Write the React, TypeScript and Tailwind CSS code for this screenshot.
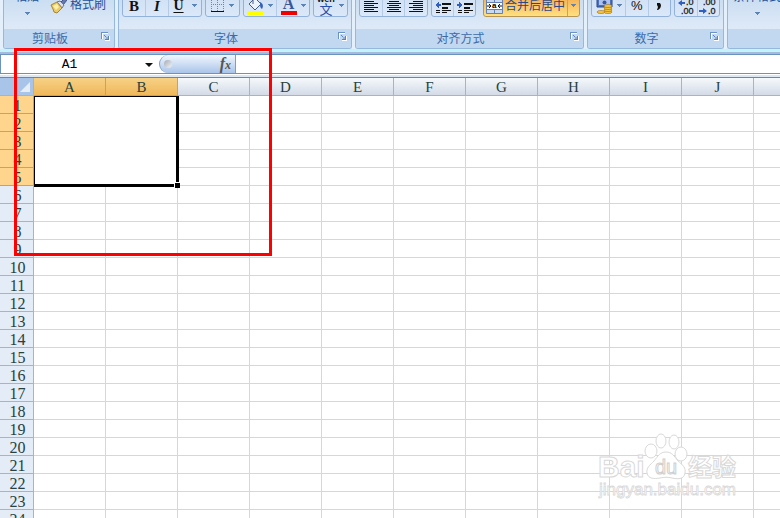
import type { ReactNode } from "react";

const COLUMNS = ["A", "B", "C", "D", "E", "F", "G", "H", "I", "J", "K"];
const ROWS = Array.from({ length: 24 }, (_, i) => i + 1);
const CJK = "font-['Liberation_Sans','Noto_Sans_CJK_SC',sans-serif]";

function Arrow() {
  return (
    <svg width="5" height="3" viewBox="0 0 5 3" className="shrink-0" shapeRendering="crispEdges" aria-hidden="true">
      <path d="M0 0h5v1H4v1H3v1H2V2H1V1H0z" fill="#5b84bd" />
    </svg>
  );
}

function Group({ label, width, launcher = true, children }: { label: string; width: string; launcher?: boolean; children: ReactNode }) {
  return (
    <section
      aria-label={label}
      className={`flex h-full flex-col overflow-hidden rounded-b-[3px] border border-t-0 border-[#95b8dc] bg-[#dce8f6] ${width}`}
    >
      <div className="flex h-[29px] shrink-0 items-end gap-[3px] bg-linear-to-b from-[#cbdef2] to-[#dfeaf8] px-[3px] pb-3">{children}</div>
      <div className="flex flex-1 items-center bg-[#c1d8f0] text-xs leading-[18px] text-[#3e6aaa]">
        <span className="flex-1 text-center">{label}</span>
        {launcher && (
          <button aria-label={`${label}选项`} className="flex w-[18px] justify-center pb-1">
            <svg width="9" height="9" viewBox="0 0 9 9" fill="none" shapeRendering="crispEdges">
              <path d="M1.500 7V1.500H7" stroke="#fff" />
              <path d="M.5 6.500V.5H6.500" stroke="#6b92c5" />
              <path d="M3 3h1v1H3zM4 4h1v1H4z" fill="#5b84bd" />
              <path d="M4 7h3V4h1v4H4z" fill="#5b84bd" />
              <path d="M5 5h2v2H5z" fill="#8eaed6" />
              <path d="M4 8.500h4.500V4" stroke="#fff" />
            </svg>
          </button>
        )}
      </div>
    </section>
  );
}

function Cluster({ width, children }: { width: string; children: ReactNode }) {
  return (
    <div className={`flex h-[23px] shrink-0 rounded-[3px] border border-[#92b2dc] bg-linear-to-b from-[#cfdff3] to-[#dbe8f9] ${width}`}>
      {children}
    </div>
  );
}

function Tool({ label, last = false, children }: { label: string; last?: boolean; children: ReactNode }) {
  return (
    <button
      aria-label={label}
      className={`flex flex-1 items-center justify-center gap-1 font-['Liberation_Serif',serif] text-[15px] leading-4 text-[#111] ${last ? "" : "border-r border-[#b4cbe8]"}`}
    >
      {children}
    </button>
  );
}

function Lines({ kind }: { kind: "left" | "center" | "right" }) {
  const x = { left: 0, center: 2, right: 4 }[kind];
  return (
    <svg width="14" height="15" viewBox="0 0 14 15" shapeRendering="crispEdges" aria-hidden="true">
      {[1.5, 3.5, 5.5, 7.5, 9.5, 11.5, 13.5].map((y, i) => (
        <path key={y} d={i % 2 ? `M${x} ${y}h10` : `M0 ${y}h14`} stroke="#111" />
      ))}
    </svg>
  );
}

function Indent({ out }: { out: boolean }) {
  return (
    <svg width="16" height="16" viewBox="0 0 16 16" shapeRendering="crispEdges" aria-hidden="true">
      <path d="M7 1h9v1H7zM7 5h9v2H7zM7 9h6v2H7zM1 12h4v1H1zM7 12h9v1H7zM1 14h4v1H1zM7 14h5v1H7z" fill="#111" />
      <path d={out ? "M0 7l4-3v2h2v2H4v2z" : "M6 7L2 4v2H0v2h2v2z"} fill="#315fc0" />
    </svg>
  );
}

function Decimal({ more }: { more: boolean }) {
  return (
    <svg width="18" height="18" viewBox="0 0 18 18" aria-hidden="true">
      <g fill="#222" stroke="#222" strokeWidth=".3" fontSize="9" fontFamily="Liberation Sans, sans-serif">
        <text x={more ? 9 : 4} y="8">{more ? ".0" : ".00"}</text>
        <text x={more ? 4 : 9} y="17">{more ? ".00" : ".0"}</text>
      </g>
      <path d={more ? "M1 6l4-3v2h3v2H5v2z" : "M8 14l-4-3v2H0v2h4v2z"} fill="#315fc0" />
    </svg>
  );
}

function Ribbon() {
  return (
    <header className="flex h-[49px] gap-[3px] bg-[#e3effb] pl-[3px]">
      <Group label="剪贴板" width="w-[112px] shrink-0">
        <button className="flex h-[29px] w-10 shrink-0 flex-col items-center text-xs leading-[18px] text-[#24519a]">
          粘贴
          <span className="mt-1.5"><Arrow /></span>
        </button>
        <button className="flex h-6 shrink-0 items-center gap-[3px] text-xs text-[#24519a]">
          <svg width="17" height="17" viewBox="0 0 17 17" className="shrink-0" aria-hidden="true">
            <path d="M11 5l4-4 2 2-4 5z" fill="#6678ad" stroke="#425487" />
            <path d="M7 5l3-1 4 4-2 3z" fill="#d8deeb" stroke="#657397" />
            <path d="M1 8l6-3 5 6-5 5-3-1-1-3z" fill="#eccb67" stroke="#a78635" />
            <path d="M3 9l4-2 2 3-3 3z" fill="#fff0a9" />
          </svg>
          <span className="whitespace-nowrap">格式刷</span>
        </button>
      </Group>

      <Group label="字体" width="w-[234px] shrink-0">
        <Cluster width="w-20">
          <Tool label="加粗"><b>B</b></Tool>
          <Tool label="倾斜"><b className="italic">I</b></Tool>
          <button aria-label="下划线" className="flex w-8 items-center justify-center gap-2 font-['Liberation_Serif',serif] text-sm leading-4 text-[#111]">
            <b className="underline underline-offset-2">U</b><Arrow />
          </button>
        </Cluster>
        <Cluster width="w-[35px]">
          <Tool label="边框" last>
            <svg width="14" height="15" viewBox="0 0 14 15" shapeRendering="crispEdges" aria-hidden="true">
              <path d="M.5 0v13M6.500 0v13M12.500 0v13M0 .5h13M0 6.500h13" stroke="#6d86ad" strokeDasharray="1 1" />
              <path d="M0 13.500h13" stroke="#111" />
            </svg>
            <Arrow />
          </Tool>
        </Cluster>
        <Cluster width="w-[67px]">
          <Tool label="填充颜色">
            <svg width="17" height="19" viewBox="0 0 17 19" aria-hidden="true">
              <path d="M8 2l6 6-6 6-6-6z" fill="#edf3fc" stroke="#455d89" />
              <path d="M6 8V1c2-1 3 0 3 3" fill="none" stroke="#455d89" />
              <path d="M13 6c4 2 3 5 2 7-2-1-2-3-2-7z" fill="#315fba" />
              <path d="M0 15h16v4H0z" fill="#ffff00" />
            </svg>
            <Arrow />
          </Tool>
          <Tool label="字体颜色" last>
            <span className="flex flex-col items-center">
              <b className="text-base leading-[15px] text-[#3a5795]">A</b>
              <span className="h-1 w-4 bg-[#f00000]" />
            </span>
            <Arrow />
          </Tool>
        </Cluster>
        <Cluster width="w-[35px]">
          <Tool label="拼音" last>
            <span className={`flex flex-col items-center ${CJK}`}>
              <span className="text-[9px] leading-2 font-bold">wén</span>
              <span className="text-[13px] leading-[13px] text-[#264eaa]">文</span>
            </span>
            <Arrow />
          </Tool>
        </Cluster>
      </Group>

      <Group label="对齐方式" width="w-[229px] shrink-0">
        <Cluster width="w-[69px]">
          <Tool label="左对齐"><Lines kind="left" /></Tool>
          <Tool label="居中"><Lines kind="center" /></Tool>
          <Tool label="右对齐" last><Lines kind="right" /></Tool>
        </Cluster>
        <Cluster width="w-[45px]">
          <Tool label="减少缩进"><Indent out /></Tool>
          <Tool label="增加缩进" last><Indent out={false} /></Tool>
        </Cluster>
        <span className="mr-px h-[23px] w-px bg-[#9dbbe0]" />
        <button className="flex h-[23px] w-[97px] shrink-0 items-center rounded-[3px] border border-[#b79655] bg-linear-to-b from-[#f2a94d] to-[#ffe080] text-xs text-[#28488a]">
          <svg width="17" height="17" viewBox="0 0 17 17" className="ml-0.5 shrink-0" aria-hidden="true">
            <path d="M.5.5h16v16H.5z" fill="#c9d9ef" stroke="#6382b3" />
            <path d="M0 5.500h17M0 12.500h17M8.500 0v5M8.500 13v4" stroke="#6382b3" />
            <path d="M1 6h15v6H1z" fill="#fff" />
            <path d="M1 9h4M12 9h4M3 7l2 2-2 2M14 7l-2 2 2 2" fill="none" stroke="#111" />
            <text x="6" y="11" fontSize="8" fontWeight="bold" fontFamily="Liberation Sans, sans-serif">a</text>
          </svg>
          <span className="flex-1 whitespace-nowrap text-center">合并后居中</span>
          <span className="flex h-full w-3 shrink-0 items-center justify-center border-l border-[#d5a24c]"><Arrow /></span>
        </button>
      </Group>

      <Group label="数字" width="w-[137px] shrink-0">
        <Cluster width="w-20">
          <button aria-label="会计数字格式" className="flex w-[34px] items-center justify-center gap-1 border-r border-[#b4cbe8]">
            <svg width="17" height="18" viewBox="0 0 17 18" className="shrink-0" aria-hidden="true">
              <path d="M1 1h15v9H1z" fill="#4d72bb" stroke="#294a8c" />
              <path d="M3 3h11v5H3z" fill="#adc3ee" />
              <circle cx="8.500" cy="5.500" r="2" fill="#38589c" />
              <g fill="#f8c73c" stroke="#9b681b" strokeWidth=".6">
                <ellipse cx="5" cy="15" rx="4" ry="1.500" />
                <ellipse cx="12" cy="15" rx="4" ry="1.500" />
                <ellipse cx="12" cy="13" rx="4" ry="1.500" />
                <ellipse cx="12" cy="11" rx="4" ry="1.500" />
                <ellipse cx="12" cy="9" rx="4" ry="1.500" />
              </g>
            </svg>
            <Arrow />
          </button>
          <Tool label="百分比"><span className="font-['Liberation_Sans',sans-serif] text-[13px]">%</span></Tool>
          <Tool label="千位分隔" last>
            <svg width="6" height="8" viewBox="0 0 6 8" aria-hidden="true"><path d="M1 1h3l1 2c0 2-1 4-3 5H1l1-3-1-2z" fill="#111" /></svg>
          </Tool>
        </Cluster>
        <Cluster width="w-[46px]">
          <Tool label="增加小数位"><Decimal more /></Tool>
          <Tool label="减少小数位" last><Decimal more={false} /></Tool>
        </Cluster>
      </Group>

      <Group label="" width="min-w-0 flex-1 rounded-br-none border-r-0" launcher={false}>
        <button className="flex h-[29px] w-[52px] shrink-0 flex-col items-center whitespace-nowrap text-xs leading-[18px] text-[#24519a]">
          条件格式
          <span className="mt-1.5"><Arrow /></span>
        </button>
      </Group>
    </header>
  );
}

function FormulaBar() {
  return (
    <div className="flex h-5 border-y border-[#6c93bf] bg-white">
      <div className="flex w-[159px] shrink-0 items-center border-l border-[#6c93bf] pt-0.5">
        <input
          aria-label="名称框"
          defaultValue="A1"
          className="w-[137px] bg-transparent text-center font-['Liberation_Mono',monospace] text-[13px] leading-4 text-black outline-none"
        />
        <button aria-label="名称列表" className="flex flex-1 justify-center">
          <svg width="8" height="4" viewBox="0 0 8 4"><path d="M0 0h8L4 4z" fill="#111" /></svg>
        </button>
      </div>
      <div className="flex w-[77px] shrink-0 items-center justify-between rounded-l-full border-r border-l border-[#7c9fc8] bg-linear-to-b from-[#f2f7fd] to-[#a9c5ea] pr-1 pl-1">
        <span className="size-2 rounded-full bg-linear-to-br from-[#a6acb5] to-[#f3f5f8]" />
        <button aria-label="插入函数" className="font-['Liberation_Serif',serif] text-base leading-4 font-bold text-[#555] italic">
          f<span className="text-xs">x</span>
        </button>
      </div>
      <input aria-label="编辑栏" className="min-w-0 flex-1 bg-white px-1 text-xs outline-none" />
    </div>
  );
}

function Sheet() {
  return (
    <div className="relative">
      <table className="w-[826px] table-fixed border-separate border-spacing-0 font-['Liberation_Serif',serif] text-[#27413e]">
        <thead>
          <tr className="h-[18px]">
            <th className="h-[18px] w-[34px] border-r border-b border-[#9eb6ce] bg-[#a9c4e9] p-0">
              <svg width="10" height="10" viewBox="0 0 10 10" className="ml-5" aria-hidden="true">
                <path d="M10 0v10H0z" fill="#e6edf6" />
              </svg>
            </th>
            {COLUMNS.map((name, i) => (
              <th
                key={name}
                scope="col"
                className={`h-[18px] w-[72px] border-r border-b p-0 pt-0.5 text-[15px] leading-[15px] font-normal ${
                  i < 2 ? "border-[#f29536] bg-linear-to-b from-[#f6d186] to-[#f0b859]" : "border-[#9eb6ce] bg-linear-to-b from-[#f6f9fc] to-[#d3dbe7]"
                }`}
              >
                {name}
              </th>
            ))}
          </tr>
        </thead>
        <tbody>
          {ROWS.map((n) => (
            <tr key={n} className="h-[18px]">
              <th
                scope="row"
                className={`h-[18px] border-r border-b p-0 pt-0.5 pl-0.5 text-base leading-[15px] font-normal ${
                  n < 6 ? "border-[#f29536] bg-[#ffd58d]" : "border-[#9eb6ce] bg-[#e4ecf7]"
                }`}
              >
                {n}
              </th>
              {COLUMNS.map((name) => (
                <td key={name} className="h-[18px] border-r border-b border-[#d0d7e5] bg-white p-0" />
              ))}
            </tr>
          ))}
        </tbody>
      </table>
      <div className="absolute top-[18px] left-[34px] h-[91px] w-[145px] border-t border-r-[3px] border-b-[3px] border-l border-black bg-white">
        <span className="absolute -right-1 -bottom-1 box-content size-[5px] border-t border-l border-white bg-black bg-clip-padding" />
      </div>
    </div>
  );
}

function Watermark() {
  return (
    <svg
      width="146"
      height="70"
      viewBox="0 0 146 70"
      className="absolute top-[432px] left-[596px]"
      fill="#fff"
      stroke="#d9d9d9"
      strokeWidth="1"
      fontFamily="Liberation Sans, Noto Sans CJK SC, sans-serif"
      aria-label="Baidu 经验"
    >
      <text x="2" y="45" fontSize="30" fontWeight="bold">Bai</text>
      <path d="M70 20c6 0 8 4 12 9 5 4 8 7 7 12-1 7-8 6-13 5-4-1-8-1-12 0-6 1-12 1-13-5-1-5 3-8 7-12 4-5 6-9 12-9z" />
      <ellipse cx="55" cy="19" rx="6" ry="7" />
      <ellipse cx="65" cy="9" rx="5" ry="7" />
      <ellipse cx="78" cy="10" rx="5" ry="7" />
      <ellipse cx="85" cy="22" rx="6" ry="7" />
      <text x="59" y="42" fontSize="20" stroke="#cfcfcf">du</text>
      <text x="92" y="44" fontSize="24" fontWeight="bold">经验</text>
      <text x="3" y="63" fontSize="17" strokeWidth=".8">jingyan.baidu.com</text>
    </svg>
  );
}

export default function App() {
  return (
    <main className={`relative h-screen overflow-hidden bg-white ${CJK}`}>
      <Ribbon />
      <div className="h-[3px] bg-[#c3f4fc]" />
      <div className="h-0.5 bg-[#a5bbdb]" />
      <FormulaBar />
      <div className="h-1 border-t border-b border-t-white border-b-[#6787b3] bg-[#dce7f5]" />
      <Sheet />
      <div className="pointer-events-none absolute top-12 left-[14px] h-52 w-[258px] border-[3px] border-[#ff0000]" />
      <Watermark />
    </main>
  );
}
